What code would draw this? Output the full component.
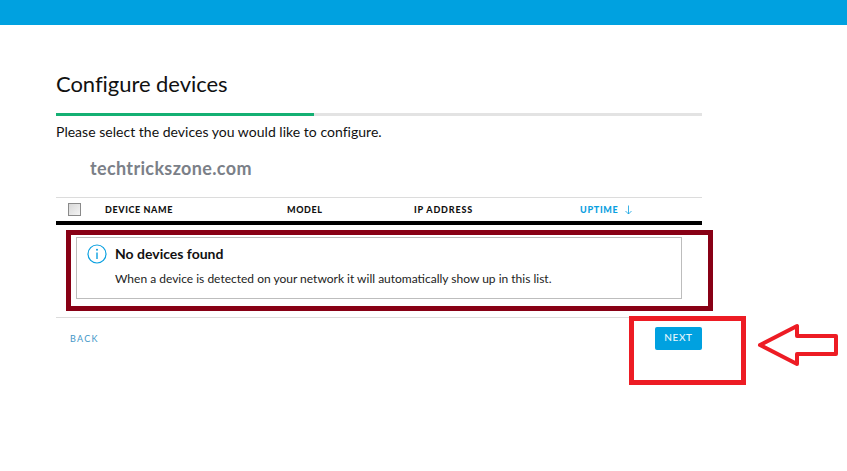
<div class="page">
  <header class="topbar"></header>
  <main class="content">
    <h1>Configure devices</h1>
    <div class="progress"><div class="fill" style="width: 40%"></div></div>
    <p class="desc">Please select the devices you would like to configure.</p>
    <div class="mark">techtrickszone.com</div>
    <div class="thead">
      <span class="cell check"><span class="box"></span></span>
      <span class="cell name">DEVICE NAME</span>
      <span class="cell model">MODEL</span>
      <span class="cell ip">IP ADDRESS</span>
      <span class="cell uptime">UPTIME
        <svg width="9" height="10" viewBox="0 0 9 10" fill="none" stroke="currentColor" stroke-width="0.8"><path d="M4.5 0.5V9M1.5 6l3 3 3-3" /></svg>
      </span>
    </div>
    <div class="notice">
      <svg class="info" width="20" height="20" viewBox="0 0 20 20" fill="none">
        <circle cx="10" cy="10" r="9" stroke="#0aa0e0" stroke-width="1.2" />
        <path d="M10 8.5V15" stroke="#0aa0e0" stroke-width="1.4" />
        <circle cx="10" cy="5.8" r="1" fill="#0aa0e0" />
      </svg>
      <div class="msg">
        <h2>No devices found</h2>
        <p>When a device is detected on your network it will automatically show up in this list.</p>
      </div>
    </div>
    <div class="footer">
      <span class="back">BACK</span>
      <button class="next">NEXT</button>
    </div>
  </main>

  <div class="anno dark"></div>
  <div class="anno red"></div>
  <svg class="anno arrow" width="847" height="471" viewBox="0 0 847 471" fill="none">
    <path d="M760 345 L797 326 V336 H836 V354 H797 V364 Z" stroke="#ed1c24" stroke-width="4" stroke-linejoin="round" />
  </svg>
</div>

<style>
  :global(body) { margin: 0; background: #fff; }
  .page {
    position: relative;
    width: 847px;
    height: 471px;
    overflow: hidden;
    font-family: Lato, "Open Sans", sans-serif;
    color: #111;
  }
  .topbar { height: 25px; background: #00a1e0; }
  .content { width: 646px; margin-left: 56px; padding-top: 45px; }
  h1 {
    margin: 0;
    font-size: 22px;
    font-weight: 400;
    line-height: 27px;
    letter-spacing: -0.05px;
    color: #111;
  }
  .progress { margin-top: 16px; height: 3px; background: #e3e3e3; }
  .fill { height: 100%; background: #14b073; }
  .desc { margin: 8px 0 0; font-size: 14px; line-height: 16px; letter-spacing: 0.02px; }
  .mark {
    margin: 18px 0 0 34px;
    font-size: 18px;
    line-height: 20px;
    font-weight: 700;
    letter-spacing: 0.35px;
    color: #7b8088;
  }
  .thead {
    display: flex;
    align-items: center;
    margin-top: 19px;
    height: 23px;
    border-top: 1px solid #dcdcdc;
    border-bottom: 4px solid #000;
    font-size: 9px;
    font-weight: 900;
    letter-spacing: 0.6px;
    color: #111;
  }
  .cell { display: block; white-space: nowrap; }
  .check { width: 49px; padding-left: 12px; box-sizing: border-box; display: flex; }
  .box {
    width: 11px;
    height: 11px;
    border: 1px solid #8a8a8a;
    background: linear-gradient(135deg, #d8d8d8, #f4f4f4);
  }
  .name { width: 182px; }
  .model { width: 127px; }
  .ip { width: 166px; letter-spacing: 0.8px; }
  .uptime { color: #0aa0e0; display: flex; align-items: center; gap: 6px; letter-spacing: 0.7px; }
  .notice {
    display: flex;
    margin: 12px 20px 0;
    height: 60px;
    border: 1px solid #bdbdbd;
    padding-left: 10px;
  }
  .info { margin-top: 6px; flex: none; }
  .msg { margin-left: 8px; }
  h2 { margin: 7px 0 0; font-size: 14px; line-height: 17px; font-weight: 700; color: #111; }
  .msg p { margin: 9px 0 0; font-size: 12px; line-height: 15px; color: #222; }
  .footer {
    display: flex;
    justify-content: space-between;
    align-items: center;
    margin-top: 18px;
    padding: 9px 0 0 14px;
    border-top: 1px solid #dcdcdc;
  }
  .back { font-size: 9px; letter-spacing: 1.3px; color: #3f97c7; }
  .next {
    width: 47px;
    height: 23px;
    padding: 0 0 4px;
    border: 0;
    border-radius: 2px;
    background: #00a1e0;
    color: #e8f7fd;
    font-family: inherit;
    font-size: 10px;
    font-weight: 500;
    letter-spacing: 0.6px;
  }
  .anno { position: absolute; box-sizing: border-box; pointer-events: none; }
  .dark { left: 66px; top: 230px; width: 647px; height: 81px; border: 5px solid #880015; }
  .red { left: 629px; top: 316px; width: 117px; height: 69px; border: 5px solid #ed1c24; }
  .arrow { left: 0; top: 0; }
</style>
